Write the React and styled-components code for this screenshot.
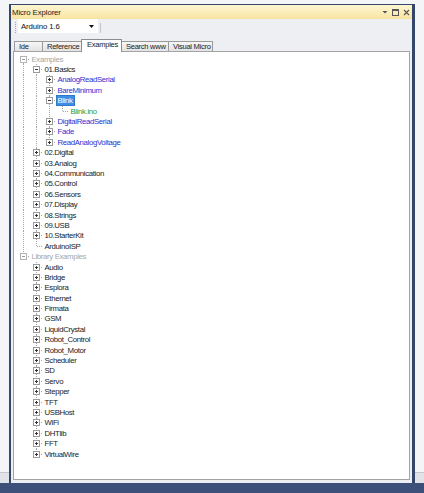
import React from "react";
import styled, { createGlobalStyle, css } from "styled-components";

const GlobalStyle = createGlobalStyle`
  html, body { margin: 0; padding: 0; }
  body {
    width: 424px;
    height: 493px;
    overflow: hidden;
    font-family: "Liberation Sans", Arial, sans-serif;
    background: linear-gradient(
      to bottom,
      #f4f5f7 0, #f4f5f7 472px,
      #c3c7cf 472px, #c3c7cf 473px,
      #e1e3e8 473px, #e1e3e8 483px,
      #3c5079 483px
    );
  }
`;

const Window = styled.div`
  margin: 4px 0 0 9px;
  width: 406px;
  height: 479px;
  box-sizing: border-box;
  border-style: solid;
  border-color: #34466a;
  border-width: 1px 3px 0 2px;
  background: #eeeff2;
  display: flex;
  flex-direction: column;
`;

const TitleBar = styled.div`
  flex: 0 0 14px;
  display: flex;
  align-items: center;
  justify-content: space-between;
  padding: 0 2px 0 1px;
  background: linear-gradient(to bottom, #fef6d4, #f8e4a0);
  font-size: 7.8px;
  letter-spacing: -0.1px;
  color: #1b1b1b;
`;

const TitleIcons = styled.div`
  display: flex;
  align-items: center;
  gap: 4px;
  color: #555;
`;

const Toolbar = styled.div`
  flex: 0 0 17px;
  display: flex;
  align-items: flex-start;
  padding-left: 4px;
  box-sizing: border-box;
`;

const Grip = styled.span`
  width: 1px;
  height: 11px;
  margin-top: 3px;
  background: repeating-linear-gradient(to bottom, #9fa3ab 0 1px, transparent 1px 2px);
`;

const Combo = styled.div`
  margin: 0 0 0 2px;
  width: 80px;
  height: 14px;
  background: #fff;
  display: flex;
  align-items: center;
  justify-content: space-between;
  padding: 0 4px 0 3px;
  box-sizing: border-box;
  font-size: 7.8px;
  letter-spacing: -0.1px;
  color: #111;
`;

const Separator = styled.span`
  width: 1px;
  height: 10px;
  margin: 4px 0 0 2px;
  background: #c2c4c9;
`;

const TabStrip = styled.div`
  flex: 0 0 15px;
  display: flex;
  align-items: flex-end;
  padding-left: 3px;
`;

const Tab = styled.div`
  width: ${(p) => p.$w}px;
  box-sizing: border-box;
  height: 10px;
  margin-left: -1px;
  border: 1px solid #9a9a9a;
  border-bottom: none;
  background: linear-gradient(to bottom, #f6f6f6, #e3e3e5);
  font-size: 7.6px;
  letter-spacing: -0.3px;
  line-height: 9px;
  padding-left: 4px;
  color: #222;
  white-space: nowrap;
  overflow: hidden;
  &:first-child { margin-left: 0; }
  ${(p) =>
    p.$active &&
    css`
      height: 13px;
      margin-bottom: -1px;
      position: relative;
      z-index: 1;
      background: #ffffff;
      border-color: #8c8c8c;
      padding-left: 5px;
      line-height: 9px;
    `}
`;

const Panel = styled.div`
  flex: 1;
  margin: 0 2px 3px 2px;
  border: 1px solid #a3a3a3;
  background: #fff;
  overflow: hidden;
`;

const Tree = styled.div`
  padding: 2px 0 0 3px;
`;

const Row = styled.div`
  display: flex;
  align-items: center;
  height: 10.4px;
`;

const DOT_V = "repeating-linear-gradient(to bottom, #a5a5a5 0 1px, transparent 1px 2px)";
const DOT_H = "repeating-linear-gradient(to right, #a5a5a5 0 1px, transparent 1px 2px)";

function cellBackground({ $v, $h }) {
  const imgs = [];
  const sizes = [];
  const pos = [];
  if ($v !== "none") {
    imgs.push(DOT_V);
    sizes.push(`1px ${$v === "full" ? "100%" : "50%"}`);
    pos.push(`6px ${$v === "bottom" ? "100%" : "0"}`);
  }
  if ($h) {
    imgs.push(DOT_H);
    sizes.push("6px 1px");
    pos.push("7px 50%");
  }
  if (!imgs.length) return "background: none;";
  return `
    background-image: ${imgs.join(",")};
    background-size: ${sizes.join(",")};
    background-position: ${pos.join(",")};
    background-repeat: no-repeat;
  `;
}

const Cell = styled.span`
  flex: 0 0 13px;
  height: 100%;
  display: flex;
  align-items: center;
  ${cellBackground}
`;

const BoxWrap = styled.span`
  display: flex;
  margin-left: 3px;
`;

const toneColor = {
  root: "#a6a6a6",
  folder: "#222",
  link: "#2f2fcf",
  file: "#2e9a2e",
};

const Label = styled.span`
  font-size: 7.8px;
  letter-spacing: -0.35px;
  line-height: 9px;
  padding: 0 1px;
  margin-left: 0.5px;
  white-space: nowrap;
  color: ${(p) => toneColor[p.$tone]};
  ${(p) =>
    p.$selected &&
    css`
      background: #3d8ee4;
      color: #fff;
      outline: 1px solid #2f78c8;
    `}
`;

const Expander = ({ open, dim }) => (
  <svg width="7" height="7" viewBox="0 0 7 7">
    <rect x="0.5" y="0.5" width="6" height="6" fill="#fff" stroke={dim ? "#b4b4b4" : "#9a9a9a"} />
    <path d="M2 3.5h3" stroke={dim ? "#9a9a9a" : "#333"} />
    {!open && <path d="M3.5 2v3" stroke={dim ? "#9a9a9a" : "#333"} />}
  </svg>
);

const collapsed = (label, tone = "folder") => ({ label, tone, collapsed: true });

const data = [
  {
    label: "Examples",
    tone: "root",
    open: true,
    children: [
      {
        label: "01.Basics",
        tone: "folder",
        open: true,
        children: [
          collapsed("AnalogReadSerial", "link"),
          collapsed("BareMinimum", "link"),
          {
            label: "Blink",
            tone: "link",
            open: true,
            selected: true,
            children: [{ label: "Blink.ino", tone: "file" }],
          },
          collapsed("DigitalReadSerial", "link"),
          collapsed("Fade", "link"),
          collapsed("ReadAnalogVoltage", "link"),
        ],
      },
      collapsed("02.Digital"),
      collapsed("03.Analog"),
      collapsed("04.Communication"),
      collapsed("05.Control"),
      collapsed("06.Sensors"),
      collapsed("07.Display"),
      collapsed("08.Strings"),
      collapsed("09.USB"),
      collapsed("10.StarterKit"),
      { label: "ArduinoISP", tone: "folder" },
    ],
  },
  {
    label: "Library Examples",
    tone: "root",
    open: true,
    children: [
      "Audio", "Bridge", "Esplora", "Ethernet", "Firmata", "GSM", "LiquidCrystal",
      "Robot_Control", "Robot_Motor", "Scheduler", "SD", "Servo", "Stepper", "TFT",
      "USBHost", "WiFi", "DHTlib", "FFT", "VirtualWire",
    ].map((l) => collapsed(l)),
  },
];

function flatten(nodes, guides, out, isRootLevel) {
  nodes.forEach((node, i) => {
    const last = i === nodes.length - 1;
    const first = i === 0;
    let v = "full";
    if (isRootLevel && first && !last) v = "bottom";
    else if (last) v = "top";
    out.push({ node, guides, v, key: out.length });
    if (node.open && node.children) flatten(node.children, [...guides, !last], out, false);
  });
  return out;
}

const rows = flatten(data, [], [], true);

const tabs = [
  { label: "Ide", w: 29 },
  { label: "Reference", w: 40 },
  { label: "Examples", w: 41, active: true },
  { label: "Search www", w: 48 },
  { label: "Visual Micro", w: 45 },
];

export default function App() {
  return (
    <>
      <GlobalStyle />
      <Window>
        <TitleBar>
          <span>Micro Explorer</span>
          <TitleIcons>
            <svg width="6" height="6" viewBox="0 0 6 6">
              <path d="M0.5 2h5L3 4.5z" fill="#555" />
            </svg>
            <svg width="7" height="7" viewBox="0 0 7 7">
              <rect x="0.5" y="0.5" width="6" height="6" fill="none" stroke="#555" />
              <path d="M0.5 1.5h6" stroke="#555" />
            </svg>
            <svg width="7" height="7" viewBox="0 0 7 7">
              <path d="M1 1l5 5M6 1l-5 5" stroke="#555" strokeWidth="1.1" />
            </svg>
          </TitleIcons>
        </TitleBar>
        <Toolbar>
          <Grip />
          <Combo>
            <span>Arduino 1.6</span>
            <svg width="5" height="3" viewBox="0 0 5 3">
              <path d="M0 0h5L2.5 3z" fill="#111" />
            </svg>
          </Combo>
          <Separator />
        </Toolbar>
        <TabStrip>
          {tabs.map((t) => (
            <Tab key={t.label} $w={t.w} $active={t.active}>
              {t.label}
            </Tab>
          ))}
        </TabStrip>
        <Panel>
          <Tree>
            {rows.map(({ node, guides, v, key }) => {
              const hasBox = node.collapsed || node.open;
              return (
                <Row key={key}>
                  {guides.map((g, i) => (
                    <Cell key={i} $v={g ? "full" : "none"} $h={false} />
                  ))}
                  <Cell $v={v} $h>
                    {hasBox && (
                      <BoxWrap>
                        <Expander open={node.open} dim={node.tone === "root"} />
                      </BoxWrap>
                    )}
                  </Cell>
                  <Label $tone={node.tone} $selected={node.selected}>
                    {node.label}
                  </Label>
                </Row>
              );
            })}
          </Tree>
        </Panel>
      </Window>
    </>
  );
}
